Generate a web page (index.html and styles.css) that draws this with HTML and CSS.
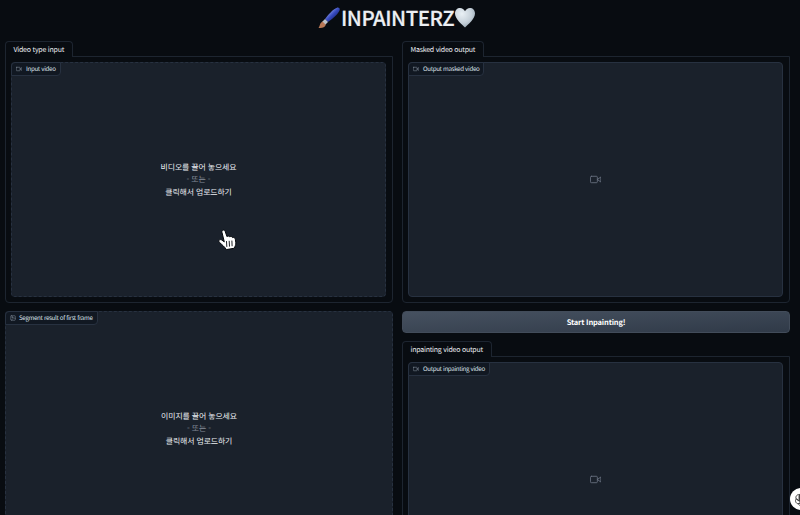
FILE: index.html
```html
<!DOCTYPE html>
<html lang="ko">
<head>
<meta charset="utf-8">
<title>INPAINTERZ</title>
<link rel="stylesheet" href="styles.css">
</head>
<body>
<svg class="defs" width="0" height="0">
  <symbol id="video" viewBox="0 0 24 24"><rect x="1" y="5" width="15" height="14" rx="2"/><path d="M23 7l-7 5 7 5z"/></symbol>
  <symbol id="image" viewBox="0 0 24 24"><rect x="3" y="3" width="18" height="18" rx="2"/><circle cx="8.5" cy="8.5" r="1.5"/><path d="M21 15l-5-5L5 21"/></symbol>
</svg>
<h1 class="title">
  <svg class="brush" viewBox="0 0 22 22"><defs><linearGradient id="handle" x1="0" y1="0" x2="1" y2="1"><stop offset=".25" stop-color="#8d9bea"/><stop offset=".5" stop-color="#3549bd"/><stop offset=".8" stop-color="#17216c"/></linearGradient></defs><path d="M7 12C10 8 15 2 19 .7c2.300-.5 3.400 1.300 2.300 3.300-2 4-8.300 9-11.300 11z" fill="url(#handle)"/><path d="M7 12l3 3-3 3-3-3z" fill="#bcc2c9"/><path d="M4.500 14.500l3.300 3.300C7 20.500 4 21.500.5 21c1.500-1.500 1-5 4-6.500z" fill="#b87856"/></svg><span class="name">INPAINTERZ</span><svg class="heart" viewBox="0 0 22 21"><defs><radialGradient id="white" cx=".35" cy=".3" r=".8"><stop offset="0" stop-color="#e9f0f5"/><stop offset=".6" stop-color="#c5d0d9"/><stop offset="1" stop-color="#8fa0ad"/></radialGradient></defs><path d="M11 20.500C8 17.500 1 12 1 6.500 1 3 3.300 1 6 1c2.300 0 4 1.300 5 3.200C12 2.300 13.700 1 16 1c2.700 0 5 2 5 5.500 0 5.500-7 11-10 14z" fill="url(#white)"/></svg>
</h1>
<main class="columns">
  <section class="column">
    <div class="tabs">
      <div class="tab tab-input">Video type input</div>
      <div class="panel panel-tall">
        <div class="block dashed">
          <div class="label"><svg class="icon"><use href="#video"/></svg>Input video</div>
          <div class="drop"><p>비디오를 끌어 놓으세요</p><p class="or">- 또는 -</p><p>클릭해서 업로드하기</p></div>
        </div>
      </div>
    </div>
    <div class="block dashed segment">
      <div class="label"><svg class="icon"><use href="#image"/></svg>Segment result of first frame</div>
      <div class="drop"><p>이미지를 끌어 놓으세요</p><p class="or">- 또는 -</p><p>클릭해서 업로드하기</p></div>
    </div>
  </section>
  <section class="column">
    <div class="tabs">
      <div class="tab tab-masked">Masked video output</div>
      <div class="panel panel-tall">
        <div class="block">
          <div class="label"><svg class="icon"><use href="#video"/></svg>Output masked video</div>
          <svg class="empty"><use href="#video"/></svg>
        </div>
      </div>
    </div>
    <button class="start">Start Inpainting!</button>
    <div class="tabs">
      <div class="tab tab-inpaint">inpainting video output</div>
      <div class="panel panel-tall">
        <div class="block">
          <div class="label"><svg class="icon"><use href="#video"/></svg>Output inpainting video</div>
          <svg class="empty"><use href="#video"/></svg>
        </div>
      </div>
    </div>
  </section>
</main>
<svg class="cursor" viewBox="0 0 20 22"><path d="M7.200 12.500L5 3.500C4.300 1 7.300.2 8.100 2.200l1.900 5.500c.8-1 2.300-.8 2.800.3.900-.9 2.200-.6 2.700.6 1.200-.5 2.600.1 2.800 1.600l.5 3.600c.2 2-.9 3.500-1.400 5.400L9.400 20.600c-1.600-2.700-4.700-5.100-7-7.300-1.500-1.600.1-3.500 2-2.500z" fill="#fff" stroke="#05080c" stroke-width="1"/><path d="M9.500 12.500l.3 5M12.200 12.200l.3 5M14.900 12l.2 4.800" stroke="#05080c" stroke-width=".9" fill="none"/></svg>
<div class="assistant"><svg viewBox="0 0 24 24"><path id="arc" d="M8 11V6.500C8 1 16 .5 17 5.500L10 9.500"/><use href="#arc" transform="rotate(60 12 12)"/><use href="#arc" transform="rotate(120 12 12)"/><use href="#arc" transform="rotate(180 12 12)"/><use href="#arc" transform="rotate(240 12 12)"/><use href="#arc" transform="rotate(300 12 12)"/></svg></div>
</body>
</html>
```

FILE: styles.css
```css
* { box-sizing: border-box; }
html, body { height: 100%; overflow: hidden; }
body {
  position: relative;
  margin: 0;
  background: #080c11;
  color: #eceff3;
  font-family: "Noto Sans CJK KR", sans-serif;
  font-size: 7px;
  text-rendering: geometricPrecision;
}
p { margin: 0; }
.defs { position: absolute; }
svg { flex: none; fill: none; stroke-linecap: round; stroke-linejoin: round; }
.title {
  display: flex;
  align-items: center;
  height: 41px;
  margin: 0;
  padding: 0 0 6px 318px;
  font-size: 20.500px;
  font-weight: 500;
  line-height: 30px;
  letter-spacing: -.5px;
  -webkit-text-stroke: .2px #eceff3;
}
.brush { width: 22px; height: 22px; margin-right: 1px; }
.heart { width: 22px; height: 21px; }
.name { width: 113px; margin-top: -2px; white-space: nowrap; }
.columns {
  display: grid;
  grid-template-columns: 388px 388px;
  column-gap: 9px;
  height: 474px;
  padding-left: 5px;
  overflow: hidden;
}
.column { display: flex; flex-direction: column; min-width: 0; }
.tabs { display: flex; flex: none; flex-direction: column; }
.tab {
  position: relative;
  z-index: 1;
  align-self: flex-start;
  height: 16px;
  margin-bottom: -1px;
  padding: 1px 0 0 7.500px;
  border: 1px solid #1d2530;
  border-bottom: 0;
  border-radius: 4px 4px 0 0;
  background: #080c11;
  line-height: 15px;
  letter-spacing: -.23px;
  white-space: nowrap;
}
.tab-input { width: 68px; }
.tab-masked { width: 82px; }
.tab-inpaint { width: 90px; }
.panel { padding: 5px 6px 5px 5px; border: 1px solid #1d2530; border-radius: 0 0 4px 4px; }
.panel-tall { height: 247px; }
.block {
  position: relative;
  display: flex;
  flex: none;
  flex-direction: column;
  align-items: center;
  justify-content: center;
  height: 235px;
  border: 1px solid #273140;
  border-radius: 4px;
  background: #1a212b;
}
.dashed { border-style: dashed; }
.segment { margin-top: 8px; }
.label {
  position: absolute;
  top: -1px;
  left: -1px;
  display: flex;
  align-items: center;
  height: 14px;
  padding: 0 4px;
  border: 1px solid #273140;
  border-radius: 4px 0 4px 0;
  background: #111822;
  color: #dce1e8;
  font-size: 6.200px;
  line-height: 12px;
  letter-spacing: -.33px;
  white-space: nowrap;
}
.icon { width: 6px; height: 6px; margin-right: 4px; stroke: #8d96a5; stroke-width: 2; }
.segment .icon { margin-right: 3px; }
.empty { width: 11px; height: 11px; stroke: #6d7685; stroke-width: 1.800; }
.drop { padding-top: 2px; font-size: 7.900px; line-height: 12.500px; letter-spacing: -.1px; text-align: center; }
.or { color: #858d9a; }
.start {
  flex: none;
  height: 22px;
  margin: 8px 0;
  padding: 1px 0 0;
  border: 1px solid #424c5a;
  border-radius: 4px;
  background: linear-gradient(to bottom right, #465160, #303a48);
  color: #fff;
  font: 700 7.500px/20px "Noto Sans CJK KR", sans-serif;
  letter-spacing: -.16px;
  text-rendering: geometricPrecision;
}
.cursor { position: absolute; left: 217px; top: 229px; width: 20px; height: 22px; }
.assistant {
  position: absolute;
  left: 790px;
  top: 488px;
  display: grid;
  place-items: center;
  width: 22px;
  height: 22px;
  border-radius: 50%;
  background: #fff;
}
.assistant svg { width: 15px; height: 15px; stroke: #333; stroke-width: 1.300; }
```
